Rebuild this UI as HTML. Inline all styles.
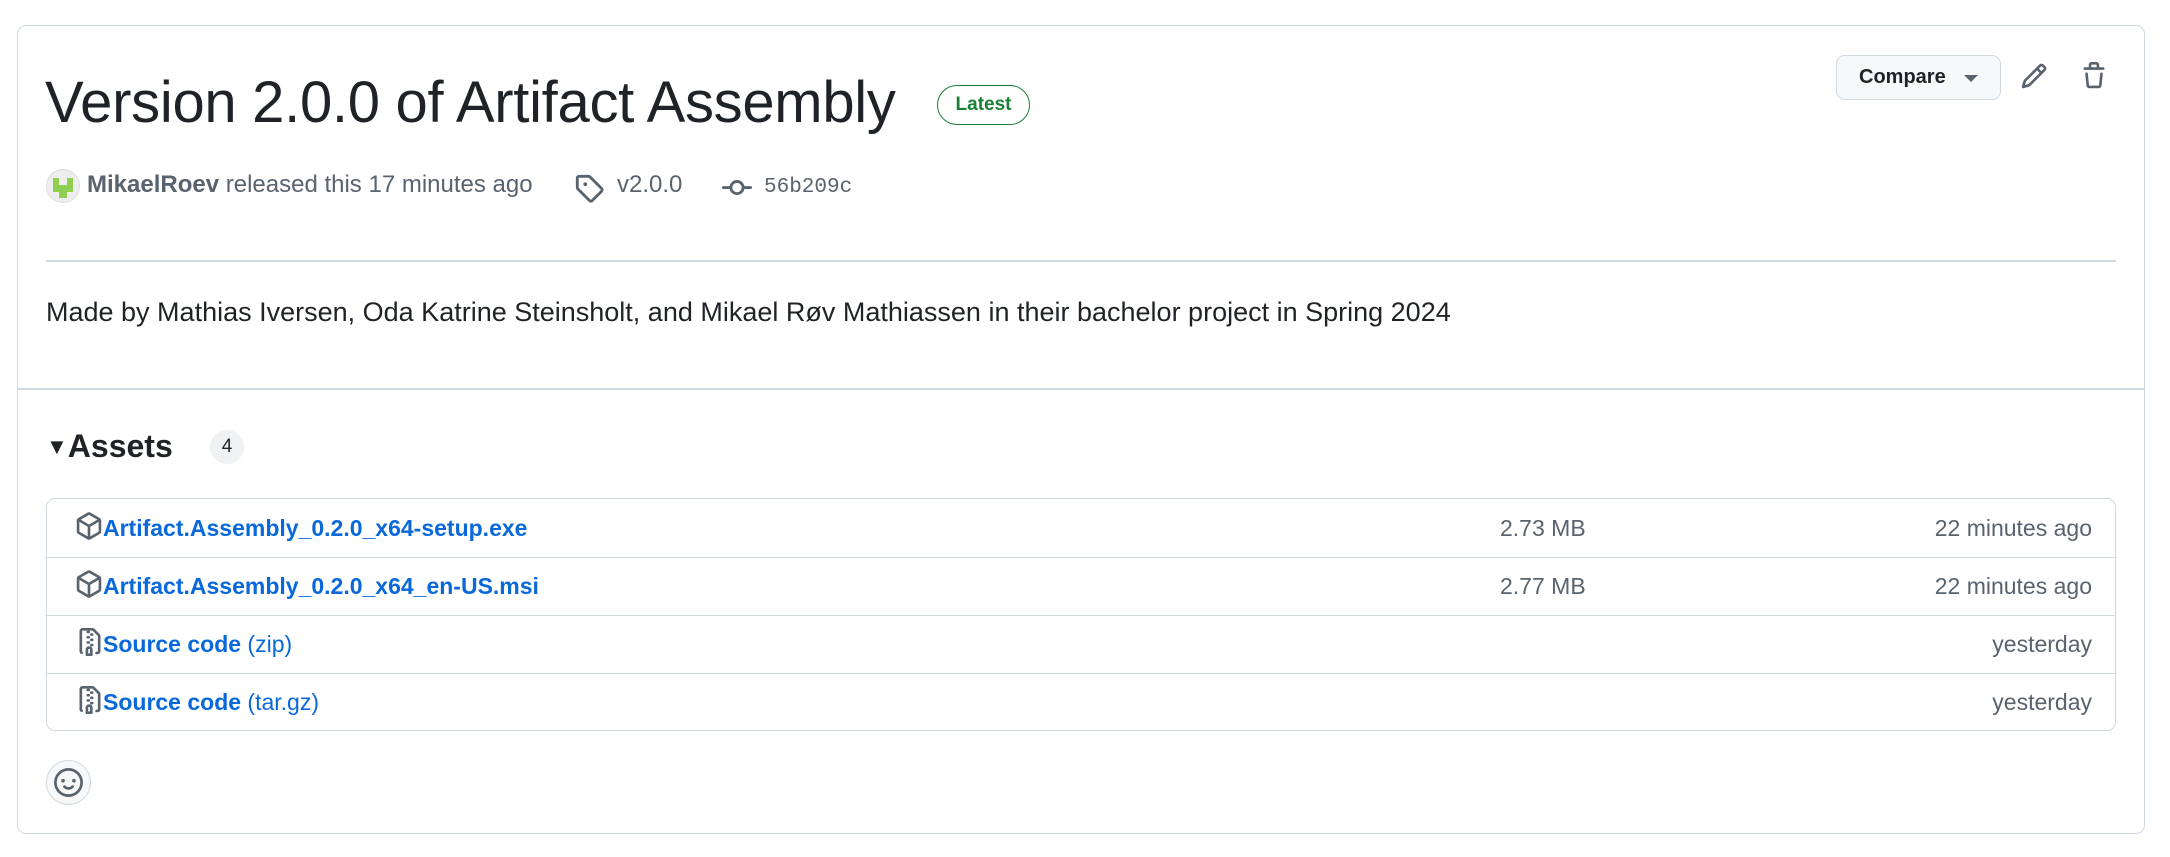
<!DOCTYPE html>
<html><head><meta charset="utf-8"><style>
*{box-sizing:border-box;margin:0;padding:0}
body{width:2170px;height:857px;background:#fff;font-family:"Liberation Sans",sans-serif;color:#1f2328;position:relative;overflow:hidden}
.card{position:absolute;left:17px;top:25px;width:2128px;height:809px;border:1.5px solid #d1d9e0;border-radius:9px}
.a{position:absolute;white-space:nowrap}
.muted{color:#59636e}
.link{color:#0969da}
.row{position:absolute;left:0;width:100%;height:58px;border-top:1.5px solid #d1d9e0}
</style></head><body>
<div class="card"></div>
<div class="a" style="left:45px;top:65px;font-size:58px;line-height:75px;letter-spacing:-0.3px">Version 2.0.0 of Artifact Assembly</div>
<div class="a" style="left:937px;top:85px;width:93px;height:40px;border:1.5px solid #1a7f37;border-radius:20px;color:#1a7f37;font-size:19px;font-weight:bold;text-align:center;line-height:37px">Latest</div>

<div class="a" style="left:1836px;top:55px;width:165px;height:45px;background:#f6f8fa;border:1.5px solid #d1d9e0;border-radius:9px;font-size:20px;font-weight:bold;line-height:42px;padding-left:22px">Compare<span style="position:absolute;left:127px;top:19px;border-left:7px solid transparent;border-right:7px solid transparent;border-top:7px solid #59636e"></span></div>
<svg class="a" style="left:2020px;top:62px" width="28" height="28" viewBox="0 0 16 16"><path d="M11.013 1.427a1.75 1.75 0 0 1 2.474 0l1.086 1.086a1.75 1.75 0 0 1 0 2.474l-8.61 8.61c-.21.21-.47.364-.756.445l-3.251.93a.75.75 0 0 1-.927-.928l.929-3.25c.081-.286.235-.547.445-.758l8.61-8.61Zm.176 4.823L9.75 4.81l-6.286 6.287a.253.253 0 0 0-.064.108l-.558 1.953 1.953-.558a.253.253 0 0 0 .108-.064Zm1.238-3.763a.25.25 0 0 0-.354 0L10.811 3.75l1.439 1.44 1.263-1.263a.25.25 0 0 0 0-.354Z" fill="#59636e"/></svg>
<svg class="a" style="left:2080px;top:62px" width="28" height="28" viewBox="0 0 16 16"><path d="M11 1.75V3h2.25a.75.75 0 0 1 0 1.5H2.75a.75.75 0 0 1 0-1.5H5V1.75C5 .784 5.784 0 6.75 0h2.5C10.216 0 11 .784 11 1.75ZM4.496 6.675l.66 6.6a.25.25 0 0 0 .249.225h5.19a.25.25 0 0 0 .249-.225l.66-6.6a.75.75 0 0 1 1.492.149l-.66 6.6A1.748 1.748 0 0 1 10.595 15h-5.19a1.75 1.75 0 0 1-1.741-1.575l-.66-6.6a.75.75 0 1 1 1.492-.15ZM6.5 1.75V3h3V1.75a.25.25 0 0 0-.25-.25h-2.5a.25.25 0 0 0-.25.25Z" fill="#59636e"/></svg>

<svg class="a" style="left:46px;top:169px" width="34" height="34" viewBox="0 0 34 34"><circle cx="17" cy="17" r="16.5" fill="#eee" stroke="#ddd"/><path d="M7 9h6v7h8V9h6v14h-6v6h-8v-6H7z" fill="#8fcf4f"/></svg>
<div class="a" style="left:87px;top:171px;font-size:24px;line-height:28px"><b class="muted">MikaelRoev</b><span class="muted"> released this 17 minutes ago</span></div>
<svg class="a" style="left:574px;top:173px" width="30" height="30" viewBox="0 0 16 16"><path d="M1 7.775V2.75C1 1.784 1.784 1 2.75 1h5.025c.464 0 .91.184 1.238.513l6.25 6.25a1.75 1.75 0 0 1 0 2.474l-5.026 5.026a1.75 1.75 0 0 1-2.474 0l-6.25-6.250A1.752 1.752 0 0 1 1 7.775Zm1.5 0c0 .066.026.13.073.177l6.25 6.25a.25.25 0 0 0 .354 0l5.025-5.025a.25.25 0 0 0 0-.354l-6.25-6.25a.25.25 0 0 0-.177-.073H2.75a.25.25 0 0 0-.25.25ZM6 5a1 1 0 1 1 0 2 1 1 0 0 1 0-2Z" fill="#59636e"/></svg>
<div class="a muted" style="left:617px;top:171px;font-size:24px;line-height:28px">v2.0.0</div>
<svg class="a" style="left:722px;top:173px" width="30" height="30" viewBox="0 0 16 16"><path d="M11.93 8.5a4.002 4.002 0 0 1-7.86 0H.75a.75.75 0 0 1 0-1.5h3.32a4.002 4.002 0 0 1 7.86 0h3.32a.75.75 0 0 1 0 1.5Zm-1.43-.75a2.5 2.5 0 1 0-5 0 2.5 2.5 0 0 0 5 0Z" fill="#59636e"/></svg>
<div class="a muted" style="left:764px;top:174px;font-size:21px;line-height:28px;font-family:'Liberation Mono',monospace">56b209c</div>

<div class="a" style="left:46px;top:260px;width:2070px;height:1.5px;background:#d1d9e0"></div>
<div class="a" style="left:46px;top:296px;font-size:27px;line-height:32px">Made by Mathias Iversen, Oda Katrine Steinsholt, and Mikael Røv Mathiassen in their bachelor project in Spring 2024</div>
<div class="a" style="left:17px;top:388px;width:2128px;height:2px;background:#d1d9e0"></div>

<div class="a" style="left:46px;top:428px;font-size:32px;line-height:36px;font-weight:bold"><span style="font-size:22px;vertical-align:3px">▼</span>Assets</div>
<div class="a" style="left:210px;top:430px;width:34px;height:34px;border-radius:17px;background:#eff1f3;font-size:19px;text-align:center;line-height:34px">4</div>

<div class="a" style="left:46px;top:498px;width:2070px;height:233px;border:1.5px solid #d1d9e0;border-radius:9px;overflow:hidden">
 <div class="row" style="top:0;border-top:none"></div>
 <div class="row" style="top:58px"></div>
 <div class="row" style="top:116px"></div>
 <div class="row" style="top:174px"></div>
</div>
<svg class="a" style="left:75px;top:512px" width="28" height="28" viewBox="0 0 16 16"><path d="m8.878.392 5.25 3.045c.54.314.872.89.872 1.514v6.098a1.75 1.75 0 0 1-.872 1.514l-5.25 3.045a1.75 1.75 0 0 1-1.756 0l-5.25-3.045A1.75 1.75 0 0 1 1 11.049V4.951c0-.624.332-1.201.872-1.514L7.122.392a1.75 1.75 0 0 1 1.756 0ZM7.875 1.69l-4.63 2.685L8 7.133l4.755-2.758-4.63-2.685a.248.248 0 0 0-.25 0ZM2.5 5.677v5.372c0 .09.047.171.125.216l4.625 2.683V8.432Zm6.25 8.271 4.625-2.683a.25.25 0 0 0 .125-.216V5.677L8.75 8.432Z" fill="#59636e"/></svg>
<div class="a link" style="left:103px;top:514px;font-size:23px;line-height:28px;font-weight:bold">Artifact.Assembly_0.2.0_x64-setup.exe</div>
<div class="a muted" style="left:1500px;top:514px;font-size:23px;line-height:28px">2.73 MB</div>
<div class="a muted" style="right:78px;top:514px;font-size:23px;line-height:28px">22 minutes ago</div>

<svg class="a" style="left:75px;top:570px" width="28" height="28" viewBox="0 0 16 16"><path d="m8.878.392 5.25 3.045c.54.314.872.89.872 1.514v6.098a1.75 1.75 0 0 1-.872 1.514l-5.25 3.045a1.75 1.75 0 0 1-1.756 0l-5.25-3.045A1.75 1.75 0 0 1 1 11.049V4.951c0-.624.332-1.201.872-1.514L7.122.392a1.75 1.75 0 0 1 1.756 0ZM7.875 1.69l-4.63 2.685L8 7.133l4.755-2.758-4.63-2.685a.248.248 0 0 0-.25 0ZM2.5 5.677v5.372c0 .09.047.171.125.216l4.625 2.683V8.432Zm6.25 8.271 4.625-2.683a.25.25 0 0 0 .125-.216V5.677L8.75 8.432Z" fill="#59636e"/></svg>
<div class="a link" style="left:103px;top:572px;font-size:23px;line-height:28px;font-weight:bold">Artifact.Assembly_0.2.0_x64_en-US.msi</div>
<div class="a muted" style="left:1500px;top:572px;font-size:23px;line-height:28px">2.77 MB</div>
<div class="a muted" style="right:78px;top:572px;font-size:23px;line-height:28px">22 minutes ago</div>

<svg class="a" style="left:76px;top:628px" width="28" height="28" viewBox="0 0 16 16"><path d="M3.5 1.75v11.5c0 .09.048.173.126.217a.75.75 0 0 1-.752 1.298A1.748 1.748 0 0 1 2 13.25V1.75C2 .784 2.784 0 3.75 0h5.586c.464 0 .909.185 1.237.513l2.914 2.914c.329.328.513.773.513 1.237v8.586A1.75 1.75 0 0 1 12.25 15h-.5a.75.75 0 0 1 0-1.5h.5a.25.25 0 0 0 .25-.25V4.664a.25.25 0 0 0-.073-.177L9.513 1.573a.25.25 0 0 0-.177-.073H7.25a.75.75 0 0 1 0 1.5h-.5a.75.75 0 0 1 0-1.5h-3a.25.25 0 0 0-.25.25Zm3.75 8.75h.5c.966 0 1.75.784 1.75 1.75v3a.75.75 0 0 1-.75.75h-2.5a.75.75 0 0 1-.75-.75v-3c0-.966.784-1.75 1.750-1.75ZM6 5.25a.75.75 0 0 1 .75-.75h.5a.75.75 0 0 1 0 1.5h-.5A.75.75 0 0 1 6 5.25Zm.75 2.25h.5a.75.75 0 0 1 0 1.5h-.5a.75.75 0 0 1 0-1.5ZM8 6.75A.75.75 0 0 1 8.75 6h.5a.75.75 0 0 1 0 1.5h-.5A.75.75 0 0 1 8 6.75ZM8.75 3h.5a.75.75 0 0 1 0 1.5h-.5a.75.75 0 0 1 0-1.5ZM8 9.75A.75.75 0 0 1 8.75 9h.5a.75.75 0 0 1 0 1.5h-.5A.75.75 0 0 1 8 9.75Zm-1 2.5v2.25h1v-2.25a.25.25 0 0 0-.25-.25h-.5a.25.25 0 0 0-.25.25Z" fill="#59636e"/></svg>
<div class="a link" style="left:103px;top:630px;font-size:23px;line-height:28px"><b>Source code</b> (zip)</div>
<div class="a muted" style="right:78px;top:630px;font-size:23px;line-height:28px">yesterday</div>

<svg class="a" style="left:76px;top:686px" width="28" height="28" viewBox="0 0 16 16"><path d="M3.5 1.75v11.5c0 .09.048.173.126.217a.75.75 0 0 1-.752 1.298A1.748 1.748 0 0 1 2 13.25V1.75C2 .784 2.784 0 3.75 0h5.586c.464 0 .909.185 1.237.513l2.914 2.914c.329.328.513.773.513 1.237v8.586A1.75 1.75 0 0 1 12.25 15h-.5a.75.75 0 0 1 0-1.5h.5a.25.25 0 0 0 .25-.25V4.664a.25.25 0 0 0-.073-.177L9.513 1.573a.25.25 0 0 0-.177-.073H7.25a.75.75 0 0 1 0 1.5h-.5a.75.75 0 0 1 0-1.5h-3a.25.25 0 0 0-.25.25Zm3.75 8.75h.5c.966 0 1.75.784 1.75 1.75v3a.75.75 0 0 1-.75.75h-2.5a.75.75 0 0 1-.75-.75v-3c0-.966.784-1.75 1.750-1.75ZM6 5.25a.75.75 0 0 1 .75-.75h.5a.75.75 0 0 1 0 1.5h-.5A.75.75 0 0 1 6 5.25Zm.75 2.25h.5a.75.75 0 0 1 0 1.5h-.5a.75.75 0 0 1 0-1.5ZM8 6.75A.75.75 0 0 1 8.75 6h.5a.75.75 0 0 1 0 1.5h-.5A.75.75 0 0 1 8 6.75ZM8.75 3h.5a.75.75 0 0 1 0 1.5h-.5a.75.75 0 0 1 0-1.5ZM8 9.75A.75.75 0 0 1 8.75 9h.5a.75.75 0 0 1 0 1.5h-.5A.75.75 0 0 1 8 9.75Zm-1 2.5v2.25h1v-2.25a.25.25 0 0 0-.25-.25h-.5a.25.25 0 0 0-.25.25Z" fill="#59636e"/></svg>
<div class="a link" style="left:103px;top:688px;font-size:23px;line-height:28px"><b>Source code</b> (tar.gz)</div>
<div class="a muted" style="right:78px;top:688px;font-size:23px;line-height:28px">yesterday</div>

<div class="a" style="left:46px;top:760px;width:45px;height:45px;border-radius:23px;background:#f6f8fa;border:1.5px solid #d1d9e0"></div>
<svg class="a" style="left:54px;top:768px" width="29" height="29" viewBox="0 0 16 16"><path d="M8 0a8 8 0 1 1 0 16A8 8 0 0 1 8 0ZM1.5 8a6.5 6.5 0 1 0 13 0 6.5 6.5 0 0 0-13 0Zm3.82 1.636a.75.75 0 0 1 1.038.175l.007.009c.103.118.22.222.35.31.264.178.683.37 1.285.37.602 0 1.02-.192 1.285-.371.13-.088.247-.192.35-.31l.007-.008a.75.75 0 0 1 1.222.87l-.022-.015c.02.013.021.015.021.015v.001l-.001.002-.002.003-.005.007-.014.019a2.066 2.066 0 0 1-.184.213c-.16.166-.338.316-.53.445-.63.418-1.37.638-2.127.629-.946 0-1.652-.308-2.126-.63a3.331 3.331 0 0 1-.715-.657l-.014-.02-.005-.006-.002-.003v-.002h-.001l.613-.432-.614.43a.75.75 0 0 1 .183-1.044ZM12 7a1 1 0 1 1-2 0 1 1 0 0 1 2 0ZM5 8a1 1 0 1 1 0-2 1 1 0 0 1 0 2Z" fill="#59636e"/></svg>
</body></html>
